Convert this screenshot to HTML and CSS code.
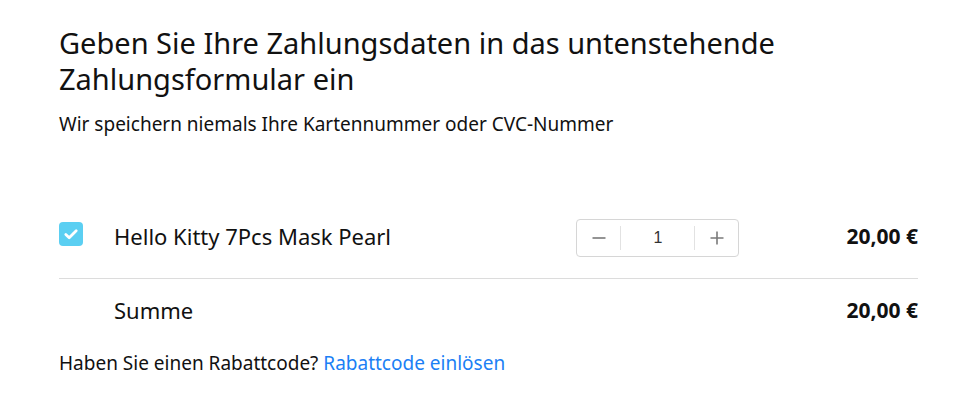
FILE: index.html
```html
<!DOCTYPE html>
<html lang="de">
<head>
<meta charset="utf-8">
<link rel="stylesheet" href="styles.css">
</head>
<body>
<main class="payment">
  <h1 class="title">Geben Sie Ihre Zahlungsdaten in das untenstehende Zahlungsformular ein</h1>
  <p class="subtitle">Wir speichern niemals Ihre Kartennummer oder CVC-Nummer</p>

  <div class="order">
    <div class="item-row">
      <span class="check">
        <svg viewBox="0 0 24 24" width="24" height="24"><rect width="24" height="24" rx="4" fill="#5bcff2"/><path d="M6.8 12.4l3.4 3.3L17.2 8.8" fill="none" stroke="#fff" stroke-width="2.8" stroke-linecap="round" stroke-linejoin="round"/></svg>
      </span>
      <span class="item-name">Hello Kitty 7Pcs Mask Pearl</span>
      <div class="stepper">
        <span class="step-btn">
          <svg viewBox="0 0 16 16" width="16" height="16"><path d="M1.5 8h13" stroke="#7a7a7a" stroke-width="1.6"/></svg>
        </span>
        <span class="step-val">1</span>
        <span class="step-btn">
          <svg viewBox="0 0 16 16" width="16" height="16"><path d="M1.5 8h13M8 1.5v13" stroke="#7a7a7a" stroke-width="1.6"/></svg>
        </span>
      </div>
      <span class="price">20,00 €</span>
    </div>
    <div class="sum-row">
      <span class="sum-label">Summe</span>
      <span class="price">20,00 €</span>
    </div>
  </div>

  <p class="coupon">Haben Sie einen Rabattcode? <a class="coupon-link" href="#">Rabattcode einlösen</a></p>
</main>
</body>
</html>
```

FILE: styles.css
```css
html, body {
  margin: 0;
  padding: 0;
  background: #fff;
}
body {
  font-family: "Noto Sans", "Open Sans", sans-serif;
  color: #111;
}
.payment {
  width: 859px;
  padding: 25px 0 0 59px;
}
.title {
  margin: 0;
  width: 800px;
  font-size: 29px;
  line-height: 36px;
  font-weight: 400;
}
.subtitle {
  margin: 15px 0 0;
  font-size: 19px;
  line-height: 24px;
}
.order {
  margin-top: 62px;
}
.item-row {
  display: flex;
  align-items: center;
  height: 80px;
  border-bottom: 1px solid #dcdcdc;
}
.check {
  display: flex;
  width: 24px;
  height: 24px;
  margin: 0 31px 8px 0;
}
.item-name {
  font-size: 22px;
  flex: 1;
  padding-bottom: 4px;
}
.stepper {
  display: flex;
  align-items: center;
  width: 161px;
  height: 36px;
  border: 1px solid #d6d6d6;
  border-radius: 4px;
  margin-right: 107px;
}
.step-btn {
  width: 43px;
  display: flex;
  justify-content: center;
  align-items: center;
}
.step-val {
  flex: 1;
  align-self: stretch;
  margin: 6px 0;
  display: flex;
  justify-content: center;
  align-items: center;
  border-left: 1px solid #e2e2e2;
  border-right: 1px solid #e2e2e2;
  font-family: "Liberation Sans", Arial, sans-serif;
  font-size: 16px;
  color: #333;
}
.price {
  font-size: 21px;
  font-weight: 700;
  margin-left: auto;
}
.item-row .price {
  padding-bottom: 4px;
}
.sum-row {
  display: flex;
  align-items: center;
  height: 61px;
  padding-left: 55px;
}
.sum-label {
  font-size: 22px;
}
.coupon {
  margin: 11px 0 0;
  font-size: 19px;
  line-height: 24px;
}
.coupon-link {
  color: #1b80f5;
  text-decoration: none;
}
```
